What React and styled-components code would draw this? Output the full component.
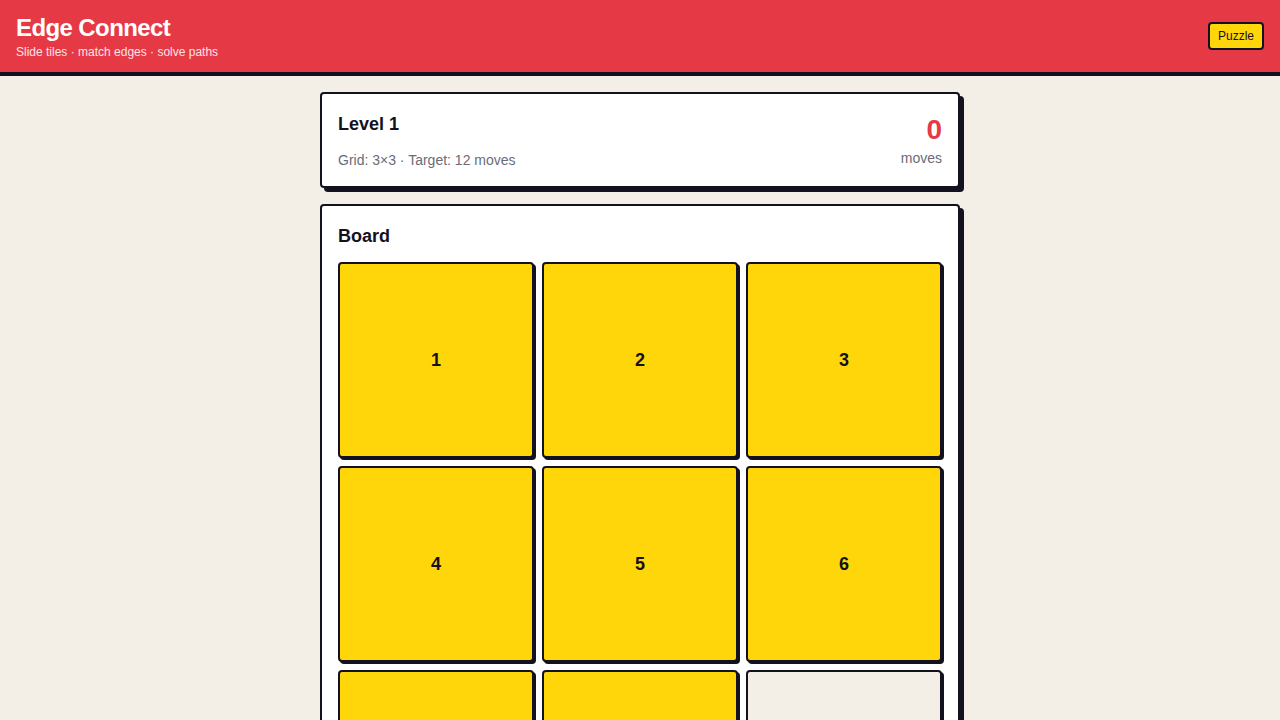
import React, { useState } from 'react';
import styled, { createGlobalStyle } from 'styled-components';

const GlobalStyle = createGlobalStyle`
  * { box-sizing: border-box; }
  body {
    margin: 0;
    background: #f4efe6;
    font-family: "Liberation Sans", Arial, sans-serif;
    color: #14111f;
  }
`;

const Header = styled.header`
  display: flex;
  justify-content: space-between;
  align-items: center;
  height: 76px;
  padding: 12px 16px;
  background: #e63946;
  border-bottom: 4px solid #14111f;
`;

const Brand = styled.div`
  display: flex;
  flex-direction: column;
`;

const Title = styled.h1`
  margin: 0;
  font-size: 24px;
  line-height: 32px;
  font-weight: 700;
  letter-spacing: -0.6px;
  color: #fff;
`;

const Tagline = styled.div`
  font-size: 12px;
  line-height: 16px;
  color: #ffe3e5;
`;

const ModeButton = styled.button`
  font-family: inherit;
  font-size: 12px;
  line-height: 16px;
  padding: 4px 8px;
  background: #ffd60a;
  color: #14111f;
  border: 2px solid #14111f;
  border-radius: 4px;
  cursor: pointer;
`;

const Main = styled.main`
  width: 640px;
  margin: 16px auto 0;
  display: flex;
  flex-direction: column;
  gap: 16px;
`;

const Card = styled.section`
  background: #fff;
  border: 2px solid #14111f;
  border-radius: 4px;
  box-shadow: 4px 4px 0 #14111f;
  padding: 16px;
`;

const LevelRow = styled.div`
  display: flex;
  justify-content: space-between;
  align-items: flex-start;
`;

const CardTitle = styled.h2`
  margin: 0;
  font-size: 18px;
  line-height: 28px;
  font-weight: 700;
`;

const Meta = styled.div`
  margin-top: 12px;
  font-size: 14px;
  line-height: 20px;
  color: #6b6b78;
`;

const Counter = styled.div`
  display: flex;
  flex-direction: column;
  align-items: flex-end;
`;

const CountValue = styled.div`
  font-size: 28px;
  line-height: 40px;
  font-weight: 700;
  color: #e63946;
`;

const CountLabel = styled.div`
  font-size: 14px;
  line-height: 16px;
  color: #6b6b78;
`;

const Grid = styled.div`
  margin-top: 12px;
  display: grid;
  grid-template-columns: repeat(3, 1fr);
  gap: 8px;
`;

const Tile = styled.button`
  aspect-ratio: 1;
  display: flex;
  align-items: center;
  justify-content: center;
  font-family: inherit;
  font-size: 18px;
  font-weight: 700;
  color: #14111f;
  background: ${(p) => (p.$empty ? '#f4efe6' : '#ffd60a')};
  border: 2px solid #14111f;
  border-radius: 4px;
  box-shadow: 2px 2px 0 #14111f;
  padding: 0;
  cursor: ${(p) => (p.$empty ? 'default' : 'pointer')};
`;

export default function App() {
  const [tiles] = useState([1, 2, 3, 4, 5, 6, 7, 8, null]);
  const [moves] = useState(0);

  return (
    <>
      <GlobalStyle />
      <Header>
        <Brand>
          <Title>Edge Connect</Title>
          <Tagline>Slide tiles · match edges · solve paths</Tagline>
        </Brand>
        <ModeButton>Puzzle</ModeButton>
      </Header>
      <Main>
        <Card>
          <LevelRow>
            <div>
              <CardTitle>Level 1</CardTitle>
              <Meta>Grid: 3×3 · Target: 12 moves</Meta>
            </div>
            <Counter>
              <CountValue>{moves}</CountValue>
              <CountLabel>moves</CountLabel>
            </Counter>
          </LevelRow>
        </Card>
        <Card>
          <CardTitle>Board</CardTitle>
          <Grid>
            {tiles.map((t, i) => (
              <Tile key={i} $empty={t === null}>
                {t}
              </Tile>
            ))}
          </Grid>
        </Card>
      </Main>
    </>
  );
}
